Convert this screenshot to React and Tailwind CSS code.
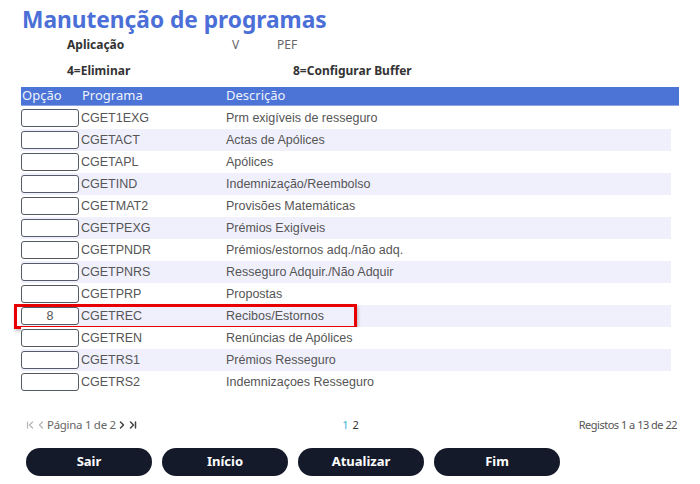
import React, { useState } from "react";
import { ChevronFirst, ChevronLeft, ChevronRight, ChevronLast } from "lucide-react";

const programs = [
  { code: "CGET1EXG", desc: "Prm exigíveis de resseguro" },
  { code: "CGETACT", desc: "Actas de Apólices" },
  { code: "CGETAPL", desc: "Apólices" },
  { code: "CGETIND", desc: "Indemnização/Reembolso" },
  { code: "CGETMAT2", desc: "Provisões Matemáticas" },
  { code: "CGETPEXG", desc: "Prémios Exigíveis" },
  { code: "CGETPNDR", desc: "Prémios/estornos adq./não adq." },
  { code: "CGETPNRS", desc: "Resseguro Adquir./Não Adquir" },
  { code: "CGETPRP", desc: "Propostas" },
  { code: "CGETREC", desc: "Recibos/Estornos", option: "8", marked: true },
  { code: "CGETREN", desc: "Renúncias de Apólices" },
  { code: "CGETRS1", desc: "Prémios Resseguro" },
  { code: "CGETRS2", desc: "Indemnizaçoes Resseguro" },
];

const App = () => {
  const [options, setOptions] = useState(programs.map((p) => p.option || ""));

  return (
    <section className="w-[700px] h-[484px] bg-white overflow-hidden font-['Noto_Sans',sans-serif]">
      <h1 className="pl-[22px] pt-[4px] h-[36px] text-[22.7px] leading-[32px] font-bold text-[#4b6fd7]">
        Manutenção de programas
      </h1>

      <div className="flex items-center pl-[67px] h-[18px] text-[12px]">
        <span className="w-[165px] font-bold text-[#333]">Aplicação</span>
        <span className="w-[45px] text-[#666]">V</span>
        <span className="text-[#666]">PEF</span>
      </div>

      <div className="flex items-center pl-[67px] mt-[8px] h-[18px] text-[12px] font-bold text-[#333]">
        <span className="w-[226px]">4=Eliminar</span>
        <span>8=Configurar Buffer</span>
      </div>

      <div className="ml-[21px] mt-[7px] w-[658px] h-[19px] bg-[#4b74d6] border-b border-[#8fa6e6] flex items-center text-[13px] text-[#eef2fd]">
        <span className="w-[61px] pl-[1px]">Opção</span>
        <span className="w-[144px]">Programa</span>
        <span>Descrição</span>
      </div>

      <div className="ml-[21px] mt-[1px] w-[650px] font-['Liberation_Sans',Arial,sans-serif] text-[12.5px] text-[#555]">
        {programs.map((p, i) => (
          <div
            key={p.code}
            className={`relative flex items-center h-[22px] ${i % 2 === 1 ? "bg-[#f0f0fd]" : "bg-white"}`}
          >
            <input
              value={options[i]}
              onChange={(e) => {
                const next = [...options];
                next[i] = e.target.value;
                setOptions(next);
              }}
              className="w-[58px] h-[18px] border border-[#555b66] rounded-[3px] bg-white text-center text-[12.5px] text-[#555] outline-none"
            />
            <span className="w-[147px] pl-[2px]">{p.code}</span>
            <span>{p.desc}</span>
            {p.marked && (
              <div className="absolute left-[-7px] top-[-1px] w-[343px] h-[25px] border-[3px] border-[#e80000] shadow-[1px_2px_3px_rgba(0,0,0,0.25)] pointer-events-none" />
            )}
          </div>
        ))}
      </div>

      <div className="grid grid-cols-[1fr_auto_1fr] items-center mt-[22px] h-[20px] pl-[24px] pr-[23px] text-[11px] text-[#555]">
        <div className="flex items-center">
          <ChevronFirst size={12} strokeWidth={2.5} className="text-[#b5b5b5]" />
          <ChevronLeft size={12} strokeWidth={2.5} className="text-[#b5b5b5] -ml-[1px]" />
          <span className="text-[#666] text-[11.5px] tracking-[-0.3px]">Página 1 de 2</span>
          <ChevronRight size={12} strokeWidth={3} className="text-[#444]" />
          <ChevronLast size={12} strokeWidth={3} className="text-[#444] -ml-[1px]" />
        </div>
        <div className="flex gap-[4px] text-[11px]">
          <span className="text-[#3bb3d9]">1</span>
          <span className="text-[#333]">2</span>
        </div>
        <div className="text-right text-[#555] tracking-[-0.5px]">Registos 1 a 13 de 22</div>
      </div>

      <div className="flex gap-[10px] pl-[26px] mt-[13px]">
        {["Sair", "Início", "Atualizar", "Fim"].map((label) => (
          <button
            key={label}
            className="w-[126px] h-[28px] rounded-full bg-[#141a2a] text-white text-[13px] font-bold"
          >
            {label}
          </button>
        ))}
      </div>
    </section>
  );
};

export default App;
